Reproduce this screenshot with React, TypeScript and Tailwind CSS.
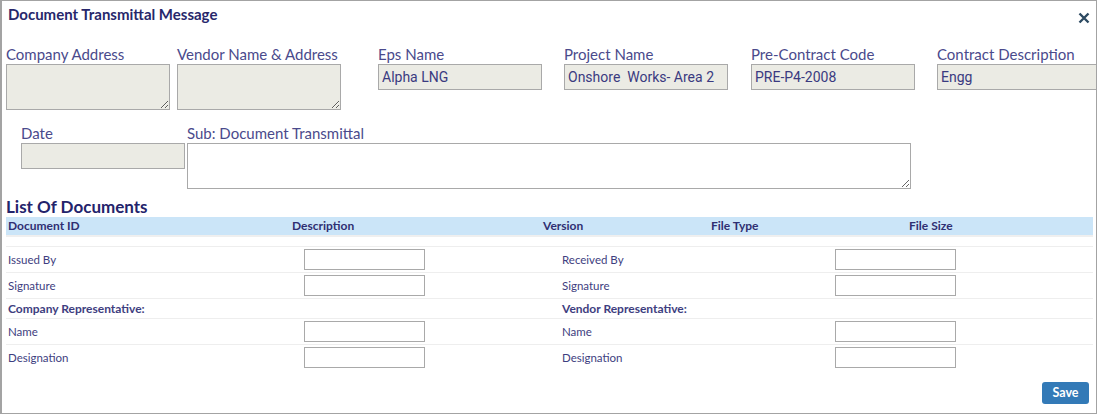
import React from 'react';

const labelCls = "h-[20px] leading-[20px] text-[15px] text-[#4a4a8c] whitespace-nowrap";
const disabledBox = "block w-[164px] border border-[#a9a9a9] bg-[#ebebe4] text-[14px] text-[#3a3a80] font-['Roboto'] px-[3px] outline-none";

const topFields = [
  { label: 'Eps Name', value: 'Alpha LNG', w: 'w-[186px]' },
  { label: 'Project Name', value: 'Onshore\u00a0 Works- Area 2', w: 'w-[187px]' },
  { label: 'Pre-Contract Code', value: 'PRE-P4-2008', w: 'w-[186px]' },
];

function SmallInput() {
  return <input className="block w-[121px] h-[21px] border border-[#a9a9a9] bg-white outline-none" />;
}

function SignRow({ left, right, bold, noInput }: { left: string; right: string; bold?: boolean; noInput?: boolean }) {
  return (
    <div className={`flex items-center border-t border-[#eeeeee] text-[#3e3e80] ${bold ? 'text-[12px] font-bold' : 'text-[11.5px]'} ${noInput ? 'h-[20px]' : 'h-[26px]'}`}>
      <div className="w-[298px] shrink-0 pl-[2px]">{left}</div>
      <div className="w-[256px] shrink-0">{!noInput && <SmallInput />}</div>
      <div className="w-[275px] shrink-0 pl-[2px]">{right}</div>
      <div>{!noInput && <SmallInput />}</div>
    </div>
  );
}

export default function App() {
  return (
    <div className="w-[1097px] h-[414px] border border-l-2 border-[#a3a3a3] bg-white font-['Lato',sans-serif] flex flex-col overflow-hidden">
      <div className="flex justify-between items-start pl-[6px] pr-[6px] pt-[3px] h-[43px]">
        <h1 className="text-[15px] leading-[20px] font-bold text-[#27276b]">Document Transmittal Message</h1>
        <svg className="mt-[8px]" width="12" height="12" viewBox="0 0 12 12">
          <path d="M1.5 1.5 L10.5 10.5 M10.5 1.5 L1.5 10.5" stroke="#2d4a62" strokeWidth="2.4" strokeLinecap="butt" />
        </svg>
      </div>

      <div className="flex pl-[4px]">
        <div className="w-[171px] shrink-0">
          <div className={labelCls}>Company Address</div>
          <textarea disabled className={`${disabledBox} h-[46px] resize`} />
        </div>
        <div className="w-[201px] shrink-0">
          <div className={labelCls}>Vendor Name &amp; Address</div>
          <textarea disabled className={`${disabledBox} h-[46px] resize`} />
        </div>
        {topFields.map((f) => (
          <div key={f.label} className={`${f.w} shrink-0`}>
            <div className={labelCls}>{f.label}</div>
            <input readOnly value={f.value} className={`${disabledBox} h-[26px]`} />
          </div>
        ))}
        <div className="shrink-0">
          <div className={labelCls}>Contract Description</div>
          <input readOnly value="Engg" className={`${disabledBox} h-[26px] w-[200px]`} />
        </div>
      </div>

      <div className="flex pl-[19px] mt-[13px]">
        <div className="w-[166px] shrink-0">
          <div className={labelCls}>Date</div>
          <input readOnly className={`${disabledBox} h-[26px]`} />
        </div>
        <div>
          <div className={labelCls}>Sub: Document Transmittal</div>
          <textarea className="block w-[724px] h-[46px] border border-[#a9a9a9] bg-white outline-none resize" />
        </div>
      </div>

      <div className="px-[4px] mt-[8px]">
        <h2 className="text-[17px] leading-[20px] font-bold text-[#23236b]">List Of Documents</h2>
        <div className="w-[1087px]">
          <div className="flex items-center h-[18px] bg-[#cbe5f8] text-[12px] font-bold text-[#2f2f72]">
            <div className="w-[286px] shrink-0 pl-[2px]">Document ID</div>
            <div className="w-[251px] shrink-0">Description</div>
            <div className="w-[168px] shrink-0">Version</div>
            <div className="w-[198px] shrink-0">File Type</div>
            <div>File Size</div>
          </div>
          <div className="h-[2px] bg-[#efefef]" />
          <div className="h-[9px]" />
          <SignRow left="Issued By" right="Received By" />
          <SignRow left="Signature" right="Signature" />
          <SignRow left="Company Representative:" right="Vendor Representative:" bold noInput />
          <SignRow left="Name" right="Name" />
          <SignRow left="Designation" right="Designation" />
        </div>
      </div>

      <div className="flex justify-end pr-[7px] mt-[12px]">
        <button className="w-[47px] h-[22px] rounded-[3px] bg-[#337ab7] text-white text-[12.5px] font-bold">Save</button>
      </div>
    </div>
  );
}
